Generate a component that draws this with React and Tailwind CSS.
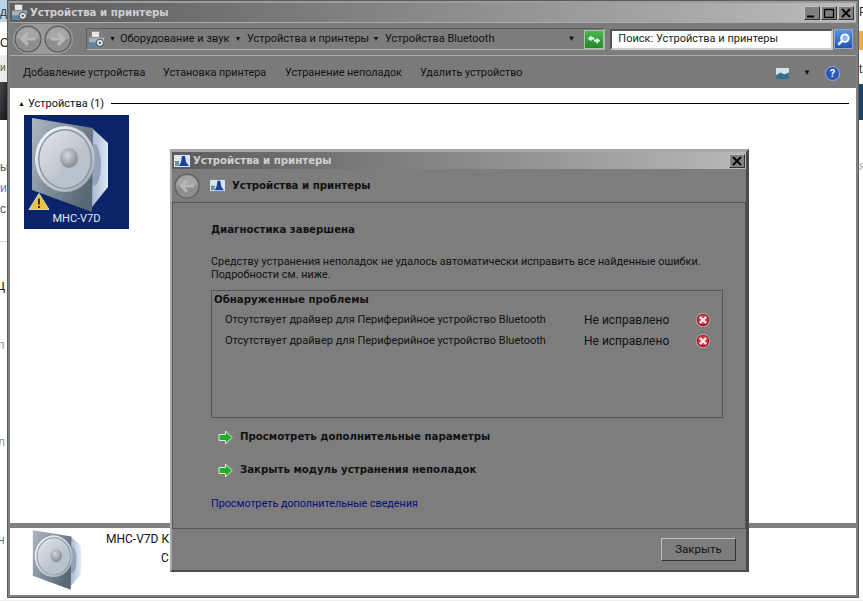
import React from "react";

const ui = "font-['Roboto','Open_Sans',sans-serif]";
const bold = "font-['DejaVu_Sans',sans-serif] font-bold text-[10.2px]";

function Speaker({ id, className, tight }) {
  return (
    <svg viewBox={tight ? "6 1 82 98" : "0 0 105 100"} className={className}>
      <defs>
        <linearGradient id={id + "f"} x1="0" y1="0" x2="1" y2="0.6">
          <stop offset="0" stopColor="#aeb8c2" />
          <stop offset="0.55" stopColor="#7d8b99" />
          <stop offset="1" stopColor="#5a6876" />
        </linearGradient>
        <linearGradient id={id + "c"} x1="0" y1="0" x2="1" y2="1">
          <stop offset="0" stopColor="#ffffff" />
          <stop offset="1" stopColor="#98a4b0" />
        </linearGradient>
        <linearGradient id={id + "d"} x1="0" y1="0" x2="1" y2="1">
          <stop offset="0" stopColor="#e2e6ea" />
          <stop offset="1" stopColor="#a3aeb9" />
        </linearGradient>
        <radialGradient id={id + "e"} cx="0.4" cy="0.35" r="0.7">
          <stop offset="0" stopColor="#d5d9dd" />
          <stop offset="1" stopColor="#7d858d" />
        </radialGradient>
        <linearGradient id={id + "s"} x1="0" y1="0" x2="1" y2="0">
          <stop offset="0" stopColor="#a9bad2" />
          <stop offset="1" stopColor="#dfe9f8" />
        </linearGradient>
      </defs>
      <path d="M68 13 L84 28 L84 72 L68 92 Z" fill={`url(#${id}s)`} />
      <ellipse cx="70" cy="50" rx="7" ry="21" fill="#93a4ba" />
      <path d="M8 3 L69 13 L68 97 L8 75 Z" fill={`url(#${id}f)`} />
      <ellipse cx="41" cy="44" rx="30" ry="33" fill={`url(#${id}c)`} />
      <ellipse cx="41" cy="44" rx="27" ry="30" fill="#8996a3" />
      <ellipse cx="41" cy="44" rx="25.500" ry="28.500" fill={`url(#${id}d)`} />
      <path d="M41 44 L66 40 A25.500 28.500 0 0 1 30 70 Z" fill="#b9c3cc" />
      <ellipse cx="45" cy="43" rx="9" ry="10" fill={`url(#${id}e)`} />
    </svg>
  );
}

function NavBtn({ left, cls = "w-[28px] h-[28px]" }) {
  return (
    <svg viewBox="0 0 26 26" className={cls}>
      <circle cx="13" cy="13" r="12.500" fill="#545454" />
      <circle cx="13" cy="13" r="11.500" fill="#8e8e8e" />
      <path d="M2.500 13a10.500 10.500 0 0 1 21 0c-6-2-15-2-21 0z" fill="#a6a6a6" />
      <path d={left ? "M20 13H8M13 7.500 7.500 13l5.500 5.500" : "M6 13h12M13 7.500 18.500 13 13 18.500"} stroke="#b8b8b8" strokeWidth="3" fill="none" />
    </svg>
  );
}

function Printer({ className }) {
  return (
    <svg viewBox="0 0 18 18" className={className}>
      <rect x="4" y="0.500" width="8" height="6" fill="#e8e8e8" stroke="#777" strokeWidth="0.500" />
      <rect x="1" y="7" width="16" height="6" fill="#a4b0ba" />
      <rect x="1" y="12" width="10" height="5" fill="#5b86a6" />
      <circle cx="12.500" cy="12.500" r="3.800" fill="#dfe5ea" stroke="#39454f" />
      <circle cx="12.500" cy="12.500" r="1.200" fill="#39454f" />
    </svg>
  );
}

function DialogIcon({ className }) {
  return (
    <svg viewBox="0 0 16 14" className={className}>
      <rect x="0" y="1" width="16" height="12" fill="#dfe6ec" />
      <path d="M8 2 L11 2 L12 8 L15 12 L5 12 L7 8Z" fill="#1c3fa8" />
      <rect x="1" y="7" width="4" height="5" fill="#5d9c9e" />
    </svg>
  );
}

function Err() {
  return (
    <svg viewBox="0 0 14 14" className="w-[14px] h-[14px] shrink-0">
      <circle cx="7" cy="7" r="7" fill="#c3b4b6" />
      <circle cx="7" cy="7" r="6.200" fill="#a8121f" />
      <circle cx="7" cy="6.500" r="5" fill="#cf3542" />
      <path d="M3.800 3.800 10.200 10.200M10.200 3.800 3.800 10.200" stroke="#f4e4e4" strokeWidth="2.600" />
    </svg>
  );
}

function GreenArrow() {
  return (
    <svg viewBox="0 0 15 15" className="w-[15px] h-[15px] shrink-0">
      <path d="M7.500 1 L14 7.500 L7.500 14 L7.500 10.500 L1 10.500 L1 4.500 L7.500 4.500 Z" fill="#1fae28" stroke="#dbeedb" strokeWidth="1" />
    </svg>
  );
}

function WinBtn({ kind, w = "w-[16px]" }) {
  return (
    <div className={`${w} h-[14px] bg-[#808080] border border-t-[#c0c0c0] border-l-[#c0c0c0] border-b-[#333] border-r-[#333] flex items-center justify-center`}>
      <svg viewBox="0 0 12 10" className="w-[12px] h-[10px]">
        {kind === "min" && <rect x="1" y="7.500" width="7" height="2" fill="#000" />}
        {kind === "max" && <path d="M1.500 1.500h9v8h-9z" fill="none" stroke="#000" strokeWidth="1.300" />}
        {kind === "close" && <path d="M2 1 10 9M10 1 2 9" stroke="#000" strokeWidth="1.800" />}
      </svg>
    </div>
  );
}

export default function App() {
  return (
    <div className={`relative w-[863px] h-[603px] overflow-hidden bg-white text-[#111] ${ui}`}>
      {/* Desktop fragments behind the window */}
      <div className="absolute inset-0 text-[12px] text-[#555] font-['Liberation_Sans',sans-serif]">
        <div className="absolute left-0 top-0 w-[7px] h-[22px] bg-[#b9d3ea] overflow-hidden pt-[3px] text-[#333]">д</div>
        <div className="absolute left-0 top-[34px] text-[#222]">О</div>
        <div className="absolute left-0 top-[55px] w-[7px] h-[27px] bg-[#ececec] text-[10px] pt-[5px]">и</div>
        <div className="absolute left-0 top-[82px] w-[7px] h-[38px] bg-gradient-to-br from-[#4a4a4c] to-[#15161a]" />
        <div className="absolute left-0 top-[158px]">ы</div>
        <div className="absolute left-0 top-[179px] text-[#5577cc]">и</div>
        <div className="absolute left-0 top-[200px]">с</div>
        <div className="absolute left-0 top-[241px] w-[7px] h-px bg-[#ddd]" />
        <div className="absolute -left-[3px] top-[275px] text-[14px] text-[#222]">ц</div>
        <div className="absolute -left-[2px] top-[336px] text-[#999]">п</div>
        <div className="absolute -left-[2px] top-[433px] text-[#999]">л</div>
        <div className="absolute -left-[2px] top-[531px] text-[#777]">н</div>
        <div className="absolute left-0 top-[600px] w-full h-px bg-[#eee]" />
        <div className="absolute left-[859px] top-[3px] text-[#333]">Р</div>
        <div className="absolute left-[859px] top-[31px] w-[4px] h-[19px] bg-[#e8b04a]" />
        <div className="absolute left-[859px] top-[60px] text-[#333]">t</div>
        <div className="absolute left-[859px] top-[84px] w-[4px] h-[36px] bg-[#1c4468]" />
        <div className="absolute left-[859px] top-[157px] text-[#aaa]">я</div>
      </div>

      {/* Main window */}
      <div className="absolute left-[7px] top-0 w-[852px] h-[598px] border-[3px] border-[#808080] border-t-[#9c9c9c] outline outline-[#5c5c5c] -outline-offset-1 flex flex-col bg-white">
        <div className="h-[19px] shrink-0 bg-gradient-to-r from-[#5b5b5b] to-[#bcbcbc] flex items-center pl-[1px] pr-[2px]">
          <Printer className="w-[17px] h-[17px]" />
          <span className={`ml-[2px] text-[#cfcfcf] ${bold}`}>Устройства и принтеры</span>
          <div className="ml-auto flex gap-[1px]">
            <WinBtn kind="min" />
            <WinBtn kind="max" />
            <WinBtn kind="close" />
          </div>
        </div>
        <div className="h-[34px] shrink-0 bg-[#7c7c7c] border-y border-[#ababab] flex items-center pl-[3px] pr-[3px]">
          <div className="flex items-center gap-[2px] rounded-full bg-[#9a9a9a] p-px"><NavBtn left /><NavBtn /></div>
          <div className="ml-[13px] w-[520px] h-[22px] border-b border-r border-[#b0b0b0] border-l border-l-[#5a5a5a] border-t border-t-[#5a5a5a] flex items-center pl-[1px] text-[11px] text-[#111] whitespace-nowrap">
            <Printer className="w-[17px] h-[17px] mr-[4px]" />
            <span className="text-[7px] mr-[4px]">▼</span><span className="w-[109px]">Оборудование и звук</span>
            <span className="text-[7px] w-[18px] text-center">▼</span><span className="w-[120px]">Устройства и принтеры</span>
            <span className="text-[7px] w-[18px] text-center">▼</span><span>Устройства Bluetooth</span>
            <span className="ml-auto mr-[9px] text-[8px] text-[#111]">▼</span>
            <div className="w-[20px] h-[19px] bg-gradient-to-b from-[#49b84e] to-[#218a2a] border border-[#a8c8a8] flex items-center justify-center">
              <svg viewBox="0 0 16 14" className="w-[14px] h-[13px]"><path d="M1 6 5 2v2.500h3V7H5v2zM15 8l-4 4V9.500H8V7h3V5z" fill="#fff" /></svg>
            </div>
          </div>
          <div className="ml-[5px] w-[223px] h-[21px] bg-white border-2 border-[#555] border-b-[#cfcfcf] border-r-[#cfcfcf] flex items-center pl-[6px] text-[11px] text-[#222]">Поиск: Устройства и принтеры</div>
          <div className="ml-[1px] w-[19px] h-[20px] bg-gradient-to-b from-[#5b92e0] to-[#1f55b5] border border-[#8fa8cc] flex items-center justify-center">
            <svg viewBox="0 0 16 16" className="w-[15px] h-[15px]"><circle cx="9.500" cy="6.500" r="4" fill="#8fb9ee" stroke="#fff" strokeWidth="2" /><path d="M6.500 9.500 2.500 13.500" stroke="#fff" strokeWidth="2.500" /></svg>
          </div>
        </div>
        <div className="h-[32px] shrink-0 bg-[#7a7a7a] flex items-center pl-[13px] pr-[16px] pt-[2px] text-[10.800px] text-[#111] whitespace-nowrap">
          <span className="w-[140px]">Добавление устройства</span>
          <span className="w-[122px]">Установка принтера</span>
          <span className="w-[135px]">Устранение неполадок</span>
          <span>Удалить устройство</span>
          <svg viewBox="0 0 14 12" className="ml-auto w-[13px] h-[11px]"><rect width="14" height="12" fill="#d8e4ea" /><path d="M0 8 5 5l4 2 5-2v7H0z" fill="#2f6f8f" /></svg>
          <span className="text-[8px] ml-[14px]">▼</span>
          <div className="w-[15px] h-[15px] ml-[14px] rounded-full bg-[#2a56b8] border border-[#9ab0dc] flex items-center justify-center text-white text-[11px] font-bold leading-none">?</div>
        </div>
        <div className="flex-1 min-h-0 bg-white pt-[8px] pl-[8px] pr-[7px] text-[11px]">
          <div className="flex items-center h-[16px]">
            <span className="text-[7px] mr-[3px]">▲</span>
            <span>Устройства (1)</span>
            <div className="ml-[7px] mb-[2px] flex-1 h-px bg-black" />
          </div>
          <div className="ml-[6px] mt-[3px] w-[105px] h-[114px] bg-[#0a246a] relative flex flex-col items-center">
            <Speaker id="a" className="w-[105px] h-[100px] shrink-0" />
            <span className="text-[#e8e8e8] text-[11px] leading-none -mt-[2px]">MHC-V7D</span>
            <svg viewBox="0 0 22 18" className="absolute left-[4px] top-[77px] w-[22px] h-[19px]"><path d="M11 1 21 17H1Z" fill="#f0c23c" stroke="#c8d0d8" /><path d="M11 6v6M11 13.500v2" stroke="#222" strokeWidth="1.800" /></svg>
          </div>
        </div>
        <div className="h-[5px] shrink-0 bg-[#808080]" />
        <div className="h-[67px] shrink-0 bg-white flex pl-[20px] pt-[1px]">
          <Speaker id="b" tight className="w-[55px] h-[62px]" />
          <div className="flex-1 text-[12px] text-[#111]">
            <div className="pl-[21px] pt-[2px] leading-[16px]">MHC-V7D К</div>
            <div className="pl-[76px] pt-[3px] leading-[16px]">С</div>
          </div>
        </div>
      </div>

      {/* Troubleshooter dialog */}
      <div className="absolute left-[170px] top-[149px] w-[579px] h-[423px] border-2 border-t-[3px] border-r-[3px] border-[#a8a8a8] border-r-[#4a4a4a] border-b-[#4a4a4a] bg-[#7d7d7d] flex flex-col text-[#111]">
        <div className="h-[17px] shrink-0 bg-gradient-to-r from-[#5c5c5c] to-[#b8b8b8] flex items-center pl-[2px] pr-[1px]">
          <DialogIcon className="w-[16px] h-[14px]" />
          <span className={`ml-[3px] text-[#d0d0d0] ${bold}`}>Устройства и принтеры</span>
          <div className="ml-auto"><WinBtn kind="close" /></div>
        </div>
        <div className="h-[33px] shrink-0 flex items-center pl-[2px]">
          <NavBtn left cls="w-[26px] h-[26px]" />
          <DialogIcon className="ml-[10px] w-[15px] h-[13px]" />
          <span className={`ml-[7px] ${bold}`}>Устройства и принтеры</span>
        </div>
        <div className="h-[327px] shrink-0 border border-[#555] pl-[38px] pr-[22px] pt-[20px] text-[11px]">
          <div className={`leading-[14px] ${bold}`}>Диагностика завершена</div>
          <div className="mt-[18px] leading-[13px] whitespace-nowrap text-[10.900px]">Средству устранения неполадок не удалось автоматически исправить все найденные ошибки.<br />Подробности см. ниже.</div>
          <div className="mt-[9px] h-[128px] border border-[#555] pl-[2px] pt-px">
            <div className={`leading-[15px] ${bold}`}>Обнаруженные проблемы</div>
            <div className="mt-[2px]">
              {[0, 1].map((i) => (
                <div key={i} className="flex items-center h-[21px] pl-[11px]">
                  <span className="w-[359px] whitespace-nowrap pt-px">Отсутствует драйвер для Периферийное устройство Bluetooth</span>
                  <span className="w-[112px] text-[12px]">Не исправлено</span>
                  <Err />
                </div>
              ))}
            </div>
          </div>
          <div className="mt-[10px] h-[18px] pl-[7px] flex items-center gap-[7px]">
            <GreenArrow /><span className={bold}>Просмотреть дополнительные параметры</span>
          </div>
          <div className="mt-[15px] h-[18px] pl-[7px] flex items-center gap-[7px]">
            <GreenArrow /><span className={bold}>Закрыть модуль устранения неполадок</span>
          </div>
          <div className="mt-[18px] leading-[14px] text-[10.750px] text-[#0a0a80]">Просмотреть дополнительные сведения</div>
        </div>
        <div className="flex-1 flex items-start justify-end pt-[9px] pr-[10px]">
          <div className="w-[75px] h-[23px] border border-t-[#c0c0c0] border-l-[#c0c0c0] border-r-[#333] border-b-[#333] flex items-center justify-center text-[11.500px]">Закрыть</div>
        </div>
      </div>
    </div>
  );
}
